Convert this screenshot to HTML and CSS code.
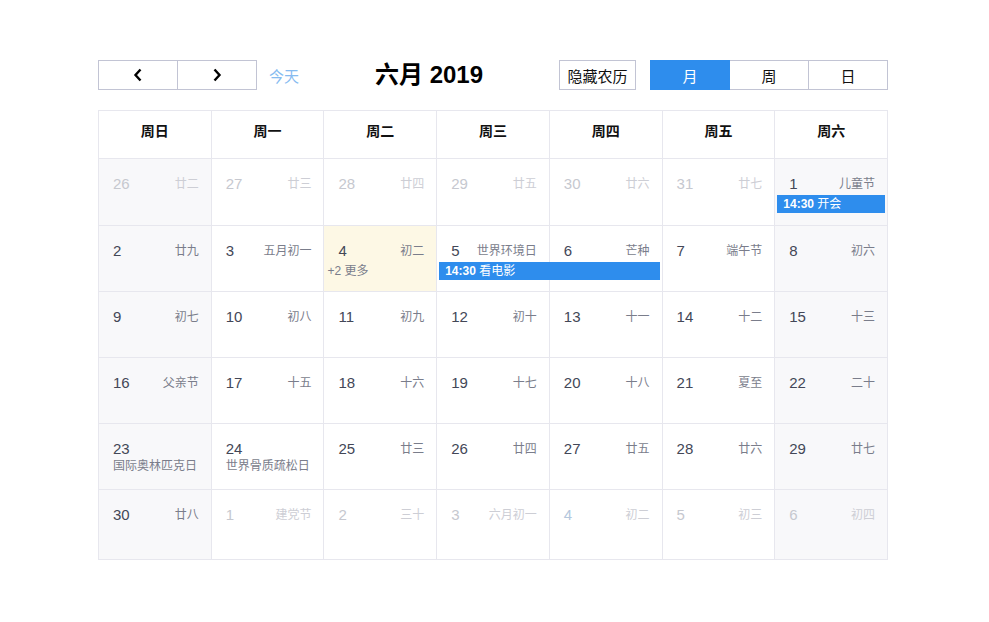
FILE: index.html
```html
<!DOCTYPE html>
<html lang="zh-CN">
<head>
<meta charset="utf-8">
<title>六月 2019</title>
<link rel="stylesheet" href="styles.css">
</head>
<body>
<div class="calendar-wrap">
  <div class="toolbar">
    <div class="tb-left">
      <div class="btn-group">
        <button class="btn nav-btn" aria-label="上一月"><svg width="10" height="14" viewBox="0 0 10 14"><path d="M7.5 1.5 L2.5 7 L7.5 12.5" fill="none" stroke="#000" stroke-width="2.4" stroke-linejoin="miter"/></svg></button>
        <button class="btn nav-btn" aria-label="下一月"><svg width="10" height="14" viewBox="0 0 10 14"><path d="M2.5 1.5 L7.5 7 L2.5 12.5" fill="none" stroke="#000" stroke-width="2.4" stroke-linejoin="miter"/></svg></button>
      </div>
      <a class="today-link">今天</a>
    </div>
    <h2 class="title">六月 2019</h2>
    <div class="tb-right">
      <button class="btn lunar-btn">隐藏农历</button>
      <div class="btn-group">
        <button class="btn view-btn active">月</button>
        <button class="btn view-btn">周</button>
        <button class="btn view-btn">日</button>
      </div>
    </div>
  </div>

  <div class="calendar">
    <div class="head-row">
      <div class="head-cell">周日</div>
      <div class="head-cell">周一</div>
      <div class="head-cell">周二</div>
      <div class="head-cell">周三</div>
      <div class="head-cell">周四</div>
      <div class="head-cell">周五</div>
      <div class="head-cell">周六</div>
    </div>

    <div class="week first">
      <div class="cell weekend other c1"><span class="num">26</span><span class="lunar">廿二</span></div>
      <div class="cell other c2"><span class="num">27</span><span class="lunar">廿三</span></div>
      <div class="cell other c3"><span class="num">28</span><span class="lunar">廿四</span></div>
      <div class="cell other c4"><span class="num">29</span><span class="lunar">廿五</span></div>
      <div class="cell other c5"><span class="num">30</span><span class="lunar">廿六</span></div>
      <div class="cell other c6"><span class="num">31</span><span class="lunar">廿七</span></div>
      <div class="cell weekend c7"><span class="num">1</span><span class="lunar">儿童节</span></div>
      <div class="event c7"><b>14:30</b> 开会</div>
    </div>

    <div class="week">
      <div class="cell weekend c1"><span class="num">2</span><span class="lunar">廿九</span></div>
      <div class="cell c2"><span class="num">3</span><span class="lunar">五月初一</span></div>
      <div class="cell today c3"><span class="num">4</span><span class="lunar">初二</span></div>
      <div class="cell c4"><span class="num">5</span><span class="lunar">世界环境日</span></div>
      <div class="cell c5"><span class="num">6</span><span class="lunar">芒种</span></div>
      <div class="cell c6"><span class="num">7</span><span class="lunar">端午节</span></div>
      <div class="cell weekend c7"><span class="num">8</span><span class="lunar">初六</span></div>
      <div class="more c3">+2 更多</div>
      <div class="event c4 span2"><b>14:30</b> 看电影</div>
    </div>

    <div class="week">
      <div class="cell weekend c1"><span class="num">9</span><span class="lunar">初七</span></div>
      <div class="cell c2"><span class="num">10</span><span class="lunar">初八</span></div>
      <div class="cell c3"><span class="num">11</span><span class="lunar">初九</span></div>
      <div class="cell c4"><span class="num">12</span><span class="lunar">初十</span></div>
      <div class="cell c5"><span class="num">13</span><span class="lunar">十一</span></div>
      <div class="cell c6"><span class="num">14</span><span class="lunar">十二</span></div>
      <div class="cell weekend c7"><span class="num">15</span><span class="lunar">十三</span></div>
    </div>

    <div class="week">
      <div class="cell weekend c1"><span class="num">16</span><span class="lunar">父亲节</span></div>
      <div class="cell c2"><span class="num">17</span><span class="lunar">十五</span></div>
      <div class="cell c3"><span class="num">18</span><span class="lunar">十六</span></div>
      <div class="cell c4"><span class="num">19</span><span class="lunar">十七</span></div>
      <div class="cell c5"><span class="num">20</span><span class="lunar">十八</span></div>
      <div class="cell c6"><span class="num">21</span><span class="lunar">夏至</span></div>
      <div class="cell weekend c7"><span class="num">22</span><span class="lunar">二十</span></div>
    </div>

    <div class="week">
      <div class="cell weekend stacked c1"><span class="num">23</span><span class="lunar">国际奥林匹克日</span></div>
      <div class="cell stacked c2"><span class="num">24</span><span class="lunar">世界骨质疏松日</span></div>
      <div class="cell c3"><span class="num">25</span><span class="lunar">廿三</span></div>
      <div class="cell c4"><span class="num">26</span><span class="lunar">廿四</span></div>
      <div class="cell c5"><span class="num">27</span><span class="lunar">廿五</span></div>
      <div class="cell c6"><span class="num">28</span><span class="lunar">廿六</span></div>
      <div class="cell weekend c7"><span class="num">29</span><span class="lunar">廿七</span></div>
    </div>

    <div class="week last">
      <div class="cell weekend c1"><span class="num">30</span><span class="lunar">廿八</span></div>
      <div class="cell other c2"><span class="num">1</span><span class="lunar">建党节</span></div>
      <div class="cell other c3"><span class="num">2</span><span class="lunar">三十</span></div>
      <div class="cell other c4"><span class="num">3</span><span class="lunar">六月初一</span></div>
      <div class="cell other blue c5"><span class="num">4</span><span class="lunar">初二</span></div>
      <div class="cell other c6"><span class="num">5</span><span class="lunar">初三</span></div>
      <div class="cell weekend other c7"><span class="num">6</span><span class="lunar">初四</span></div>
    </div>
  </div>
</div>
</body>
</html>
```

FILE: styles.css
```css
* { box-sizing: border-box; }

body {
  margin: 0;
  background: #fff;
  font-family: "Liberation Sans", "Noto Sans CJK SC", Arial, sans-serif;
  color: #3d4152;
}

.calendar-wrap {
  width: 790px;
  margin-left: 98px;
  padding-top: 60px;
}

/* ---------- toolbar ---------- */
.toolbar {
  display: flex;
  justify-content: space-between;
  align-items: center;
  height: 30px;
  margin-bottom: 20px;
}

.tb-left, .tb-right {
  display: flex;
  align-items: center;
}

.btn-group { display: flex; }

.btn {
  height: 30px;
  margin: 0;
  padding: 0;
  border: 1px solid #c2c4d4;
  background: #fff;
  font-family: "Liberation Sans", "Noto Sans CJK SC", sans-serif;
  font-size: 15px;
  color: #111;
  display: flex;
  align-items: center;
  justify-content: center;
}

.btn-group .btn + .btn { margin-left: -1px; }

.nav-btn { width: 80px; }

.today-link {
  margin-left: 12px;
  font-size: 15px;
  color: #86bbf0;
}

.title {
  margin: 0;
  font-size: 24px;
  font-weight: bold;
  color: #000;
  line-height: 30px;
}

.lunar-btn {
  width: 77px;
  margin-right: 14px;
}

.view-btn { width: 80px; }

.view-btn.active {
  background: #2e8ded;
  border-color: #2e8ded;
  color: #fff;
  position: relative;
}

/* ---------- calendar grid ---------- */
.calendar {
  border-top: 1px solid #e7e7ee;
  border-right: 1px solid #e7e7ee;
  border-bottom: 1px solid #e7e7ee;
}

.head-row {
  display: grid;
  grid-template-columns: repeat(7, 1fr);
  height: 47px;
}

.head-cell {
  display: flex;
  justify-content: center;
  align-items: flex-start;
  padding-top: 12px;
  line-height: 16px;
  font-size: 14px;
  font-weight: bold;
  color: #111;
  border-left: 1px solid #e7e7ee;
}

.week {
  display: grid;
  grid-template-columns: repeat(7, 1fr);
  grid-template-rows: 36px 18px 1fr;
  height: 66px;
  border-top: 1px solid #e7e7ee;
}
.week.first { height: 67px; }
.week.last { height: 70px; }

.cell {
  grid-row: 1 / -1;
  display: flex;
  justify-content: space-between;
  align-items: flex-start;
  padding: 16px 12px 0 14px;
  border-left: 1px solid #e7e7ee;
  line-height: 18px;
}

.c1 { grid-column: 1; }
.c2 { grid-column: 2; }
.c3 { grid-column: 3; }
.c4 { grid-column: 4; }
.c5 { grid-column: 5; }
.c6 { grid-column: 6; }
.c7 { grid-column: 7; }
.event.span2 { grid-column: 4 / span 2; }

.weekend { background: #f8f8fa; }
.today { background: #fdf8e5; }

.num {
  font-size: 15px;
  color: #434757;
}

.lunar {
  font-size: 12px;
  color: #7a7d8b;
}

.other .num { color: #c6c8cf; }
.other .lunar { color: #cdced5; }
.other.blue .num { color: #b4c7dd; }

.cell.stacked {
  flex-direction: column;
  justify-content: flex-start;
}
.cell.stacked .lunar { line-height: 17px; }

.event {
  grid-row: 2;
  z-index: 1;
  margin: 0 2px 0 3px;
  height: 18px;
  line-height: 18px;
  padding-left: 6px;
  background: #2e8ded;
  color: #fff;
  font-size: 12px;
  white-space: nowrap;
  overflow: hidden;
}
.event b { font-weight: bold; }

.more {
  grid-row: 2;
  z-index: 1;
  padding-left: 4px;
  font-size: 12px;
  line-height: 18px;
  color: #7a7d8b;
}
```
